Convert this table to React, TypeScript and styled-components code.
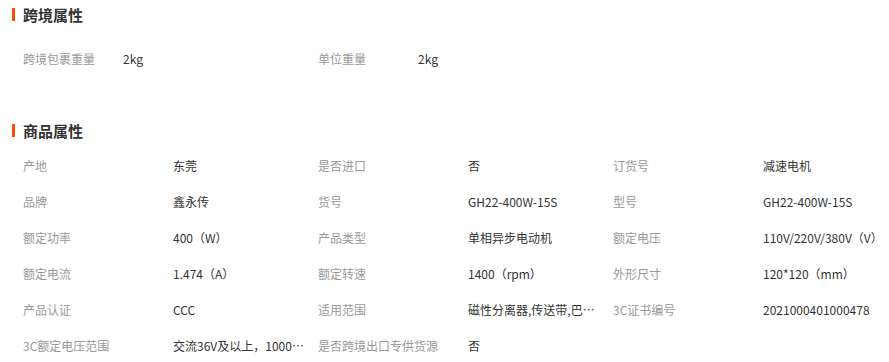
import React from 'react';
import styled, { createGlobalStyle } from 'styled-components';

const GlobalStyle = createGlobalStyle`
  body {
    margin: 0;
    background: #fff;
    font-family: "Noto Sans CJK SC", "Liberation Sans", sans-serif;
  }
`;

const Page = styled.div`
  width: 889px;
`;

const Section = styled.section<{ $gap?: number }>`
  margin-bottom: ${p => p.$gap ?? 0}px;
`;

const SectionTitle = styled.h3`
  display: flex;
  align-items: center;
  margin: 0;
  height: 28px;
  padding-left: 12px;
  font-size: 15px;
  font-weight: bold;
  color: #333;

  &::before {
    content: '';
    width: 3px;
    height: 13px;
    background: #ff4d00;
    margin-right: 8px;
  }
`;

const AttrGrid = styled.div<{ $labelWidth: number; $top: number }>`
  display: grid;
  grid-template-columns: repeat(3, ${p => p.$labelWidth}px ${p => 295 - p.$labelWidth}px);
  grid-auto-rows: 36px;
  padding-left: 23px;
  margin-top: ${p => p.$top}px;
`;

const Label = styled.div`
  display: flex;
  align-items: center;
  font-size: 12px;
  color: #999;
  white-space: nowrap;
`;

const Value = styled.div`
  align-self: center;
  min-width: 0;
  margin-right: 12px;
  font-size: 12px;
  color: #333;
  white-space: nowrap;
  overflow: hidden;
  text-overflow: ellipsis;
`;

const crossBorder: [string, string][] = [
  ['跨境包裹重量', '2kg'],
  ['单位重量', '2kg'],
];

const productAttrs: [string, string][] = [
  ['产地', '东莞'],
  ['是否进口', '否'],
  ['订货号', '减速电机'],
  ['品牌', '鑫永传'],
  ['货号', 'GH22-400W-15S'],
  ['型号', 'GH22-400W-15S'],
  ['额定功率', '400（W）'],
  ['产品类型', '单相异步电动机'],
  ['额定电压', '110V/220V/380V（V）'],
  ['额定电流', '1.474（A）'],
  ['额定转速', '1400（rpm）'],
  ['外形尺寸', '120*120（mm）'],
  ['产品认证', 'CCC'],
  ['适用范围', '磁性分离器,传送带,巴氏杀菌机,输送机'],
  ['3C证书编号', '2021000401000478'],
  ['3C额定电压范围', '交流36V及以上，1000V以下'],
  ['是否跨境出口专供货源', '否'],
];

const App: React.FC = () => {
  return (
    <Page>
      <GlobalStyle />
      <Section $gap={40}>
        <SectionTitle>跨境属性</SectionTitle>
        <AttrGrid $labelWidth={100} $top={12}>
          {crossBorder.map(([label, value]) => (
            <React.Fragment key={label}>
              <Label>{label}</Label>
              <Value>{value}</Value>
            </React.Fragment>
          ))}
        </AttrGrid>
      </Section>

      <Section>
        <SectionTitle>商品属性</SectionTitle>
        <AttrGrid $labelWidth={150} $top={3}>
          {productAttrs.map(([label, value]) => (
            <React.Fragment key={label}>
              <Label>{label}</Label>
              <Value title={value}>{value}</Value>
            </React.Fragment>
          ))}
        </AttrGrid>
      </Section>
    </Page>
  );
};

export default App;
